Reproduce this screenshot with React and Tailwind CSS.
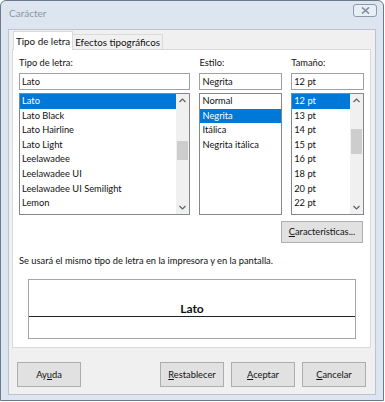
import React from 'react';

const fonts = ['Lato', 'Lato Black', 'Lato Hairline', 'Lato Light', 'Leelawadee', 'Leelawadee UI', 'Leelawadee UI Semilight', 'Lemon'];
const styles = ['Normal', 'Negrita', 'Itálica', 'Negrita itálica'];
const sizes = ['12 pt', '13 pt', '14 pt', '15 pt', '16 pt', '18 pt', '20 pt', '22 pt'];

function Scrollbar({ thumbTop, thumbHeight }) {
  return (
    <div className="relative w-[13px] h-full bg-[#f0f0f0] flex flex-col items-center justify-between py-[4px]">
      <svg width="7" height="5" viewBox="0 0 7 5">
        <path d="M0.5 4 L3.5 1 L6.5 4" fill="none" stroke="#606060" strokeWidth="1.2" />
      </svg>
      <div
        className="absolute left-[1px] w-[11px] bg-[#cdcdcd]"
        style={{ top: thumbTop, height: thumbHeight }}
      />
      <svg width="7" height="5" viewBox="0 0 7 5">
        <path d="M0.5 1 L3.5 4 L6.5 1" fill="none" stroke="#606060" strokeWidth="1.2" />
      </svg>
    </div>
  );
}

function ListColumn({ label, value, items, selected, width, scroll }) {
  return (
    <div className="flex flex-col" style={{ width }}>
      <div className="h-[14px] leading-[14px]">{label}</div>
      <div className="mt-[3px] h-[17px] border border-[#a0a0a0] bg-white px-[2px] leading-[15px]">{value}</div>
      <div className="mt-[3px] h-[122px] border border-[#828790] bg-white flex">
        <div className="flex-1 flex flex-col">
          {items.map((it, i) => (
            <div
              key={it}
              className={
                'h-[14.6px] leading-[14.6px] px-[2px] whitespace-nowrap ' +
                (i === selected ? 'bg-[#0078d7] text-white' : '')
              }
            >
              {it}
            </div>
          ))}
        </div>
        {scroll && <Scrollbar thumbTop={scroll[0]} thumbHeight={scroll[1]} />}
      </div>
    </div>
  );
}

function Btn({ children }) {
  return (
    <div className="h-[25px] w-[64px] border border-[#adadad] bg-[#e1e1e1] flex items-center justify-center">
      {children}
    </div>
  );
}

export default function App() {
  return (
    <div
      className="w-[385px] h-[402px] bg-white text-[9.3px] text-[#111]"
      style={{ fontFamily: 'Lato, "Noto Sans", sans-serif' }}
    >
      <div className="w-[384px] h-[401px] border border-[#6b7a8a] rounded-t-[6px] bg-[#dde6f0] flex flex-col">
        {/* Title bar */}
        <div className="h-[28px] flex items-center justify-between pl-[8px] pr-[6px]">
          <span className="text-[#8a96a3] text-[10px] -mt-[3px]">Carácter</span>
          <div className="w-[24px] h-[13px] -mt-[9px] border border-[#8c9aab] rounded-[3px] bg-[#e8eef5] flex items-center justify-center">
            <svg width="9" height="7" viewBox="0 0 9 7">
              <path d="M1 0.5 L8 6.5 M8 0.5 L1 6.5" stroke="#7f8c9b" strokeWidth="1.6" />
            </svg>
          </div>
        </div>

        {/* Client area */}
        <div className="mx-[7px] h-[366px] border border-[#b9c4d0] bg-[#f0f0f0] flex flex-col px-[3px] pt-[1px]">
          {/* Tabs */}
          <div className="flex items-end h-[18px] pl-[1px] text-[9.8px] whitespace-nowrap">
            <div className="h-[19px] px-[2px] bg-white border border-b-0 border-[#d9d9d9] leading-[18px] relative z-10 -mb-px">
              Tipo de letra
            </div>
            <div className="h-[15px] px-[2px] bg-[#f0f0f0] border border-l-0 border-b-0 border-[#d9d9d9] leading-[14px]">
              Efectos tipográficos
            </div>
          </div>

          {/* Panel */}
          <div className="w-[359px] h-[299px] bg-white border border-[#d9d9d9] px-[6px] pt-[6px]">
            <div className="flex gap-[9px]">
              <ListColumn
                label="Tipo de letra:"
                value="Lato"
                items={fonts}
                selected={0}
                width={172}
                scroll={[47, 19]}
              />
              <ListColumn label="Estilo:" value="Negrita" items={styles} selected={1} width={83} />
              <ListColumn
                label="Tamaño:"
                value="12 pt"
                items={sizes}
                selected={0}
                width={73}
                scroll={[35, 25]}
              />
            </div>

            <div className="flex justify-end mt-[6px] pr-[1px]">
              <div className="h-[22px] w-[82px] border border-[#adadad] bg-[#e1e1e1] flex items-center justify-center">
                <span><u>C</u>aracterísticas...</span>
              </div>
            </div>

            <div className="mt-[11px] h-[14px] leading-[14px]">Se usará el mismo tipo de letra en la impresora y en la pantalla.</div>

            <div className="mt-[11px] ml-[9px] w-[328px] h-[60px] border border-[#a6a6a6] relative">
              <div className="absolute left-0 right-0 top-[36px] border-t border-[#222]" />
              <div className="absolute left-0 right-0 top-[21px] flex justify-center">
                <span className="bg-white px-[1px] font-bold text-[12px] leading-[15px]">Lato</span>
              </div>
            </div>
          </div>

          {/* Buttons */}
          <div className="flex mt-[14px] pl-[5px] pr-[6px]">
            <Btn>
              <span>Ay<u>u</u>da</span>
            </Btn>
            <div className="flex-1" />
            <div className="flex gap-[7px]">
              <Btn>
                <span><u>R</u>establecer</span>
              </Btn>
              <Btn>
                <span><u>A</u>ceptar</span>
              </Btn>
              <Btn>
                <span><u>C</u>ancelar</span>
              </Btn>
            </div>
          </div>
        </div>
      </div>
    </div>
  );
}
